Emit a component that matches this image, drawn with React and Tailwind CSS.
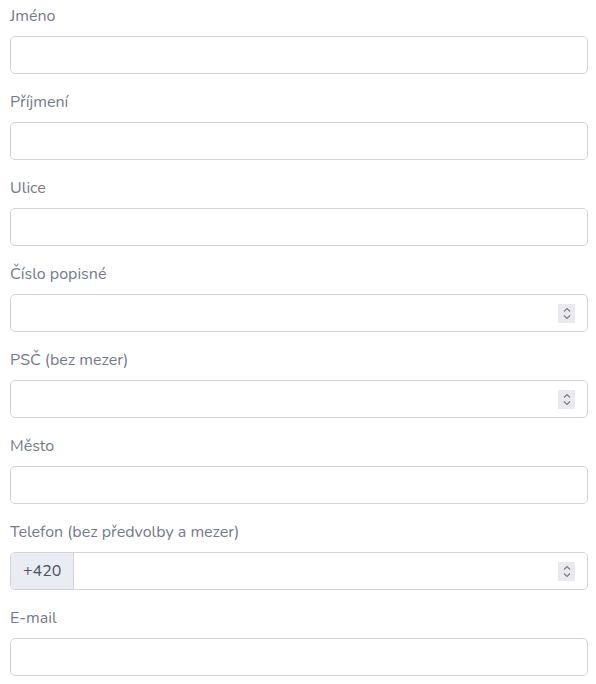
import React from "react";

function Spinner() {
  return (
    <div className="flex h-[19px] w-[17px] items-center justify-center bg-[#e9e9ef]">
      <svg width="10" height="15" viewBox="0 0 10 15" fill="none" stroke="#7a7a80" strokeWidth="1.1">
        <path d="M2 5.5 L5 2.5 L8 5.5" />
        <path d="M2 9.5 L5 12.5 L8 9.5" />
      </svg>
    </div>
  );
}

function Field({ label, number, prefix }) {
  return (
    <div className="mb-[16px]">
      <label className="block h-[24px] text-[16px] leading-[24px] text-[#737a8c] mb-[8px]">{label}</label>
      <div className="flex h-[38px] w-full rounded-[5px] border border-[#d5d1e3] bg-white">
        {prefix && (
          <div className="flex items-center rounded-l-[5px] border-r border-[#d5d1e3] bg-[#e9ecf3] px-[12px] text-[16px] text-[#4d5260]">
            {prefix}
          </div>
        )}
        <div className="flex flex-1 items-center justify-end pr-[12px]">
          {number && <Spinner />}
        </div>
      </div>
    </div>
  );
}

export default function App() {
  return (
    <div className="bg-white pl-[10px] pt-[4px] pr-[8px] font-['Nunito','Lato','Noto_Sans',sans-serif]">
      <Field label="Jméno" />
      <Field label="Příjmení" />
      <Field label="Ulice" />
      <Field label="Číslo popisné" number />
      <Field label="PSČ (bez mezer)" number />
      <Field label="Město" />
      <Field label="Telefon (bez předvolby a mezer)" number prefix="+420" />
      <Field label="E-mail" />
    </div>
  );
}
